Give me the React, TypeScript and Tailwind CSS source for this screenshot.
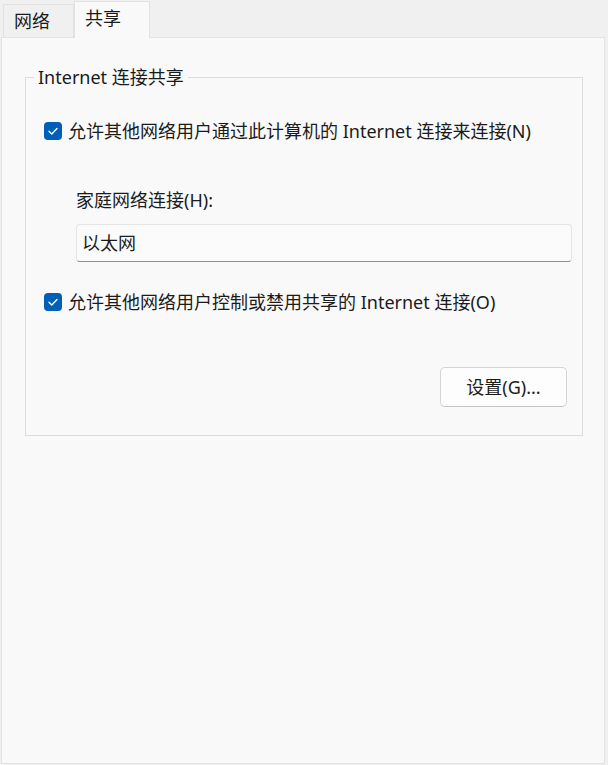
import React from "react";

const font = {
  fontFamily: '"Noto Sans", "Noto Sans CJK SC", sans-serif',
};

function Check() {
  return (
    <span className="flex h-[18px] w-[18px] shrink-0 items-center justify-center rounded-[4px] bg-[#005fb8]">
      <svg width="18" height="18" viewBox="0 0 18 18" fill="none">
        <path d="M5 9.3 L7.8 12 L13 6.6" stroke="white" strokeWidth="1.4" strokeLinecap="round" strokeLinejoin="round" />
      </svg>
    </span>
  );
}

export default function App() {
  return (
    <div className="w-[608px] h-[765px] bg-[#f0f0f0] text-[18px] text-[#1b1b1b]" style={font}>
      <div className="flex h-[37px] items-end pl-[3px]">
        <div className="flex h-[33px] w-[71px] items-center border border-b-0 border-[#e2e2e2] bg-[#f0f0f0] pl-[10px] leading-[20px]">
          网络
        </div>
        <div className="relative z-10 -mb-[1px] flex h-[37px] w-[76px] items-center border border-b-0 border-[#e2e2e2] bg-[#f9f9f9] pb-[5px] pl-[10px] leading-[20px]">
          共享
        </div>
      </div>
      <div className="ml-[1px] h-[727px] w-[604px] border border-[#e3e3e3] bg-[#f9f9f9]">
        <div className="relative ml-[23px] mt-[39px] flex h-[359px] w-[558px] flex-col border border-[#dcdcdc]">
          <span className="absolute left-[8px] top-[-11px] bg-[#f9f9f9] px-[4px] leading-[20px]">
            Internet 连接共享
          </span>
          <div className="mt-[43px] flex h-[20px] items-center gap-[6px] pl-[18px] leading-[20px]">
            <Check />
            <span>允许其他网络用户通过此计算机的 Internet 连接来连接(N)</span>
          </div>
          <div className="mt-[49px] h-[20px] pl-[50px] leading-[20px]">家庭网络连接(H):</div>
          <div className="ml-[50px] mt-[14px] flex h-[38px] w-[496px] items-center rounded-[4px] border border-[#e5e5e5] border-b-[#8f8f8f] bg-[#fbfbfb] pl-[5px] leading-[20px]">
            以太网
          </div>
          <div className="mt-[30px] flex h-[20px] items-center gap-[6px] pl-[18px] leading-[20px]">
            <Check />
            <span>允许其他网络用户控制或禁用共享的 Internet 连接(O)</span>
          </div>
          <div className="mt-[55px] flex justify-end pr-[15px]">
            <button className="flex h-[40px] w-[127px] items-center justify-center rounded-[5px] border border-[#d4d4d4] border-b-[#c4c4c4] bg-[#fdfdfd] leading-[20px]">
              设置(G)...
            </button>
          </div>
        </div>
      </div>
    </div>
  );
}
